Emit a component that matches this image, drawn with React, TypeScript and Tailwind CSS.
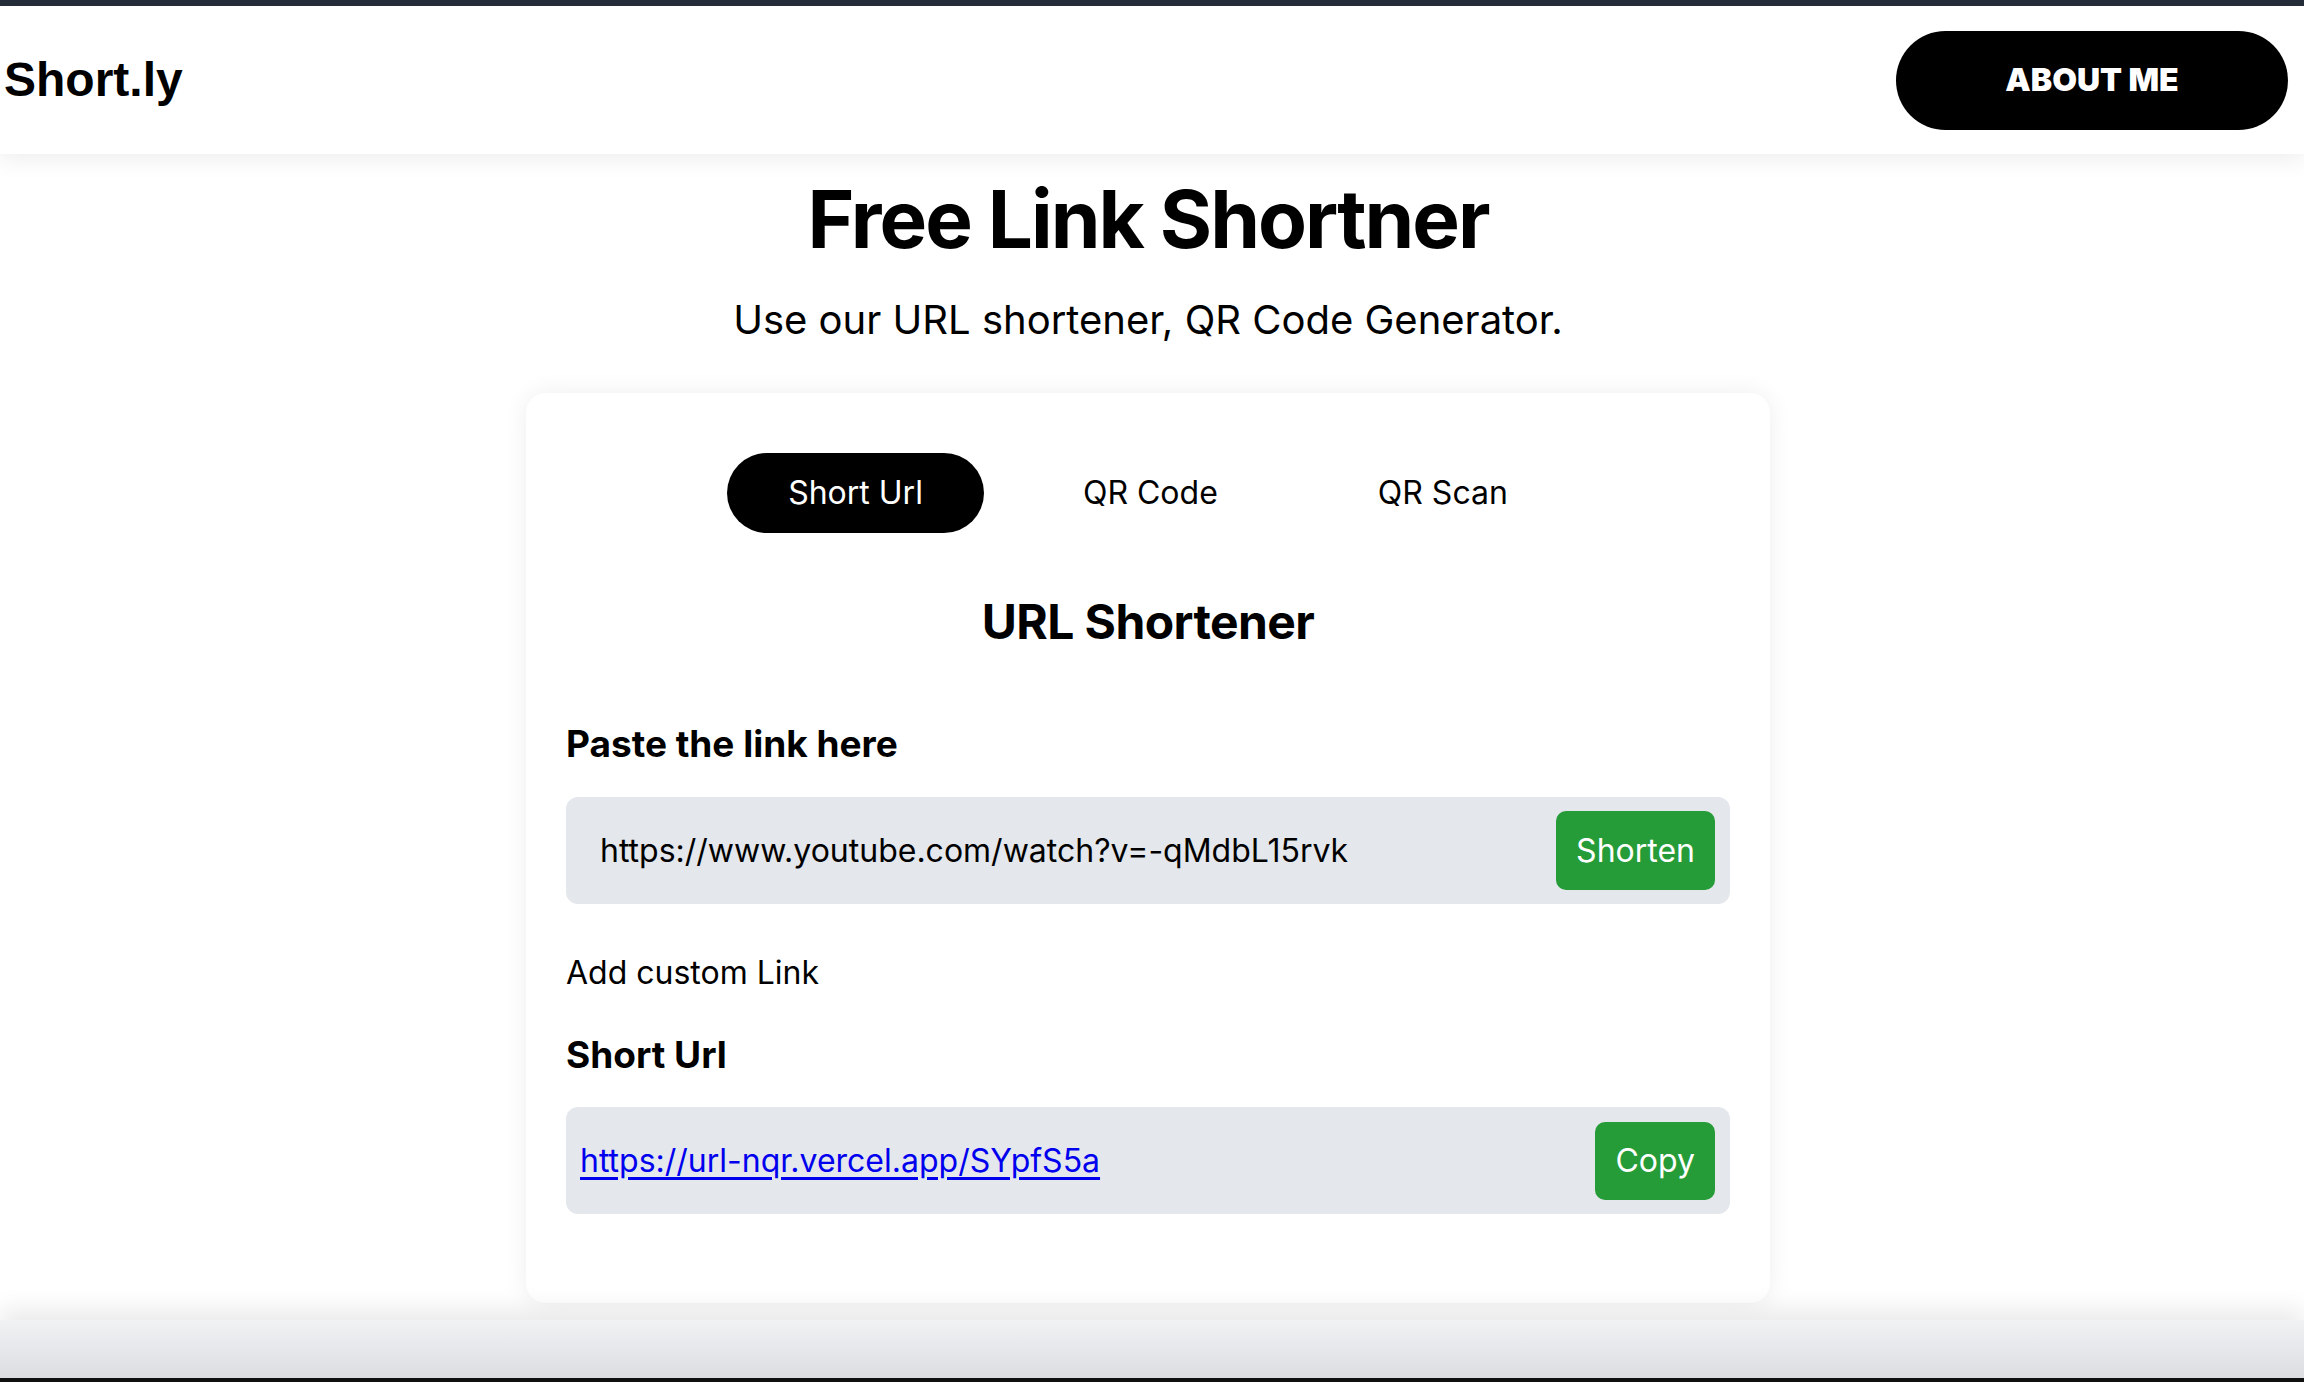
import { useState } from 'react';

const tabs = ['Short Url', 'QR Code', 'QR Scan'];

function Header() {
  return (
    <header className="h-[148px] bg-white flex items-center justify-between pl-[4px] pr-[16px] shadow-[0_6px_22px_rgba(0,0,0,0.07)] relative z-10">
      <span className="text-[48px] font-bold text-black font-['Liberation_Sans',Arial,sans-serif]">Short.ly</span>
      <button className="w-[392px] h-[99px] rounded-full bg-black text-white text-[32px] font-black uppercase">
        About me
      </button>
    </header>
  );
}

function Tabs() {
  const [active, setActive] = useState('Short Url');
  return (
    <div className="flex justify-center gap-[38px]">
      {tabs.map(tab => (
        <button
          key={tab}
          onClick={() => setActive(tab)}
          className={
            tab === active
              ? 'h-[80px] px-[61px] rounded-full bg-black text-white text-[32px] leading-none'
              : 'h-[80px] px-[61px] rounded-full text-black text-[32px] leading-none'
          }
        >
          {tab}
        </button>
      ))}
    </div>
  );
}

function UrlShortener() {
  return (
    <div className="flex flex-col">
      <h2 className="mt-[65px] text-center text-[48px] leading-none font-bold tracking-[-0.6px]">URL Shortener</h2>

      <label className="mt-[79px] text-[37px] leading-none font-bold">Paste the link here</label>
      <div className="mt-[35px] h-[107px] rounded-[12px] bg-[#e4e7eb] flex items-center pl-[34px] pr-[15px]">
        <input
          className="flex-1 bg-transparent outline-none text-[32px] text-black"
          defaultValue="https://www.youtube.com/watch?v=-qMdbL15rvk"
        />
        <button className="h-[79px] px-[20px] rounded-[10px] bg-[#259c38] text-white text-[32px]">Shorten</button>
      </div>

      <span className="mt-[53px] text-[32px] leading-none">Add custom Link</span>

      <span className="mt-[47px] text-[37px] leading-none font-bold">Short Url</span>
      <div className="mt-[34px] h-[107px] rounded-[12px] bg-[#e4e7eb] flex items-center justify-between pl-[14px] pr-[15px]">
        <a href="#" className="text-[32px] text-[#0000ee] underline underline-offset-[5px]">
          https://url-nqr.vercel.app/SYpfS5a
        </a>
        <button className="h-[78px] px-[20px] rounded-[10px] bg-[#259c38] text-white text-[32px]">Copy</button>
      </div>
    </div>
  );
}

export default function App() {
  return (
    <div className="min-h-[1382px] flex flex-col bg-white text-black font-['Inter',sans-serif]">
      <div className="h-[6px] bg-[#262d3a]" />
      <Header />

      <main className="flex-1 flex flex-col items-center pr-[8px] pb-[17px]">
        <h1 className="mt-[25px] text-[80px] leading-none font-bold tracking-tight">Free Link Shortner</h1>
        <p className="mt-[41px] text-[40px] leading-none">Use our URL shortener, QR Code Generator.</p>

        <section className="mt-[53px] w-[1244px] rounded-[20px] bg-white shadow-[0_0_24px_rgba(0,0,0,0.07)] px-[40px] pt-[60px] pb-[89px]">
          <Tabs />
          <UrlShortener />
        </section>
      </main>

      <footer className="h-[58px] bg-gradient-to-b from-[#f1f2f4] to-[#dcdde0] shadow-[0_-10px_26px_rgba(0,0,0,0.09)] relative z-10" />
      <div className="h-[4px] bg-[#111111]" />
    </div>
  );
}
